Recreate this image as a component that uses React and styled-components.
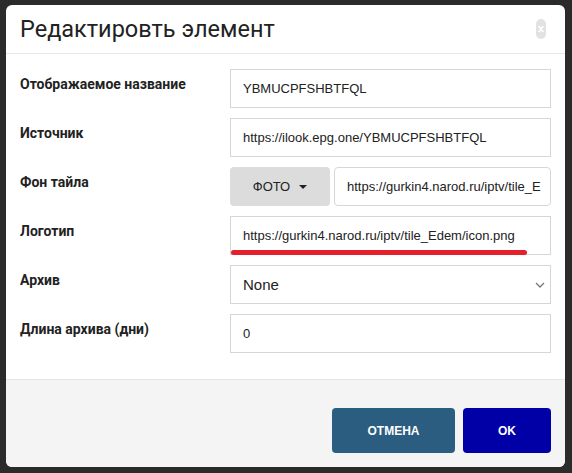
import React from 'react';
import styled, { createGlobalStyle } from 'styled-components';

const GlobalStyle = createGlobalStyle`
  html, body {
    margin: 0;
    padding: 0;
    background: #2b2b2b;
  }
  body {
    font-family: Roboto, "Liberation Sans", Arial, sans-serif;
  }
`;

const Overlay = styled.div`
  width: 572px;
  height: 473px;
  padding: 5px 7px 0 6px;
  box-sizing: border-box;
`;

const Dialog = styled.div`
  width: 559px;
  height: 462px;
  background: #fff;
  border-radius: 6px;
  overflow: hidden;
  display: flex;
  flex-direction: column;
`;

const Header = styled.div`
  height: 48px;
  display: flex;
  align-items: center;
  justify-content: space-between;
  padding: 0 19px 0 14px;
  border-bottom: 1px solid #e8e8e8;
`;

const Title = styled.h2`
  margin: 0;
  font-size: 23.5px;
  font-weight: 400;
  color: #222;
`;

const Close = styled.button`
  border: none;
  background: none;
  padding: 0;
  display: flex;
  cursor: pointer;
`;

const Body = styled.div`
  flex: 1;
  padding: 15px 14px 0 14px;
  display: flex;
  flex-direction: column;
  gap: 10px;
`;

const Row = styled.div`
  display: grid;
  grid-template-columns: 210px minmax(0, 1fr);
  align-items: start;
`;

const Label = styled.label`
  font-size: 14px;
  font-weight: 700;
  color: #222;
  padding-top: 7px;
`;

const Input = styled.div`
  height: 39px;
  box-sizing: border-box;
  border: 1px solid #d6d6d6;
  border-radius: ${(p) => (p.$rounded ? '4px' : '0')};
  padding: 0 12px;
  display: flex;
  align-items: center;
  font-family: "Liberation Sans", Arial, sans-serif;
  font-size: ${(p) => p.$size || '13px'};
  color: #222;
  white-space: nowrap;
  overflow: ${(p) => (p.$visible ? 'visible' : 'hidden')};
  position: relative;
  flex: 1;
  min-width: 0;
`;

const Group = styled.div`
  display: flex;
  gap: 4px;
  min-width: 0;
`;

const DropButton = styled.button`
  width: 100px;
  flex: none;
  height: 39px;
  border: none;
  border-radius: 4px;
  background: #dcdcdc;
  font-family: "Liberation Sans", Arial, sans-serif;
  font-size: 13px;
  color: #222;
  display: flex;
  align-items: center;
  justify-content: center;
  gap: 9px;
  padding: 0;
`;

const Caret = styled.span`
  width: 0;
  height: 0;
  border-left: 4px solid transparent;
  border-right: 4px solid transparent;
  border-top: 4px solid #222;
`;

const Underline = styled.span`
  position: absolute;
  left: 0;
  bottom: -1px;
  width: 296px;
  height: 5px;
  border-radius: 3px;
  background: #e3202b;
`;

const Chevron = styled.svg`
  position: absolute;
  right: 4px;
  top: 15px;
`;

const Footer = styled.div`
  height: 88px;
  background: #f4f4f5;
  border-top: 1px solid #e6e6e6;
  box-sizing: border-box;
  display: flex;
  justify-content: flex-end;
  align-items: flex-start;
  gap: 8px;
  padding: 28px 14px 0 0;
`;

const Button = styled.button`
  height: 45px;
  width: ${(p) => p.$width};
  border: none;
  border-radius: 4px;
  background: ${(p) => p.$bg};
  color: #fff;
  font-family: "Liberation Sans", Arial, sans-serif;
  font-size: 12px;
  font-weight: 700;
  cursor: pointer;
`;

export default function App() {
  return (
    <>
      <GlobalStyle />
      <Overlay>
        <Dialog>
          <Header>
            <Title>Редактировть элемент</Title>
            <Close>
              <svg width="10" height="20" viewBox="0 0 10 20">
                <rect x="0" y="0" width="10" height="20" rx="5" fill="#e2e2e2" />
                <path d="M3 7.5 L7 12.5 M7 7.5 L3 12.5" stroke="#fff" strokeWidth="1.6" strokeLinecap="round" />
              </svg>
            </Close>
          </Header>
          <Body>
            <Row>
              <Label>Отображаемое название</Label>
              <Input>YBMUCPFSHBTFQL</Input>
            </Row>
            <Row>
              <Label>Источник</Label>
              <Input>https://ilook.epg.one/YBMUCPFSHBTFQL</Input>
            </Row>
            <Row>
              <Label>Фон тайла</Label>
              <Group>
                <DropButton>
                  ФОТО <Caret />
                </DropButton>
                <Input $rounded>https://gurkin4.narod.ru/iptv/tile_E</Input>
              </Group>
            </Row>
            <Row>
              <Label>Логотип</Label>
              <Input $visible>
                https://gurkin4.narod.ru/iptv/tile_Edem/icon.png
                <Underline />
              </Input>
            </Row>
            <Row>
              <Label>Архив</Label>
              <Input $size="15px">
                None
                <Chevron width="12" height="8" viewBox="0 0 12 8">
                  <path d="M2 2 L6 6 L10 2" fill="none" stroke="#777" strokeWidth="1.3" />
                </Chevron>
              </Input>
            </Row>
            <Row>
              <Label>Длина архива (дни)</Label>
              <Input>0</Input>
            </Row>
          </Body>
          <Footer>
            <Button $width="123px" $bg="#2a5d80">ОТМЕНА</Button>
            <Button $width="88px" $bg="#0000a6">OK</Button>
          </Footer>
        </Dialog>
      </Overlay>
    </>
  );
}
